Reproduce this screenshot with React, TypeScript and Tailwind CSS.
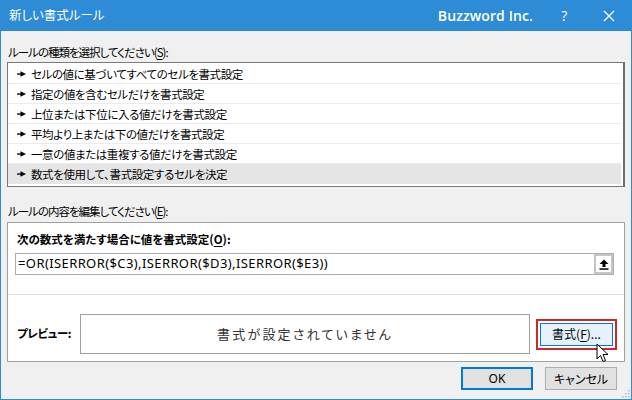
import React from "react";

const JP = "font-['Noto_Sans_CJK_JP','Noto_Sans',sans-serif] [font-feature-settings:'palt']";

const items = [
  "セルの値に基づいてすべてのセルを書式設定",
  "指定の値を含むセルだけを書式設定",
  "上位または下位に入る値だけを書式設定",
  "平均より上または下の値だけを書式設定",
  "一意の値または重複する値だけを書式設定",
  "数式を使用して、書式設定するセルを決定",
];

function Bullet() {
  return (
    <svg width="9" height="6" viewBox="0 0 9 6" className="shrink-0">
      <rect x="0" y="2.4" width="5" height="1.3" fill="#000" />
      <polygon points="3.5,0.3 9,3 3.5,5.7" fill="#000" />
    </svg>
  );
}

export default function App() {
  return (
    <div className={`w-[632px] h-[400px] bg-[#f0f0f0] border-x border-b border-[#2e8bd6] flex flex-col text-[11.5px] tracking-[-0.4px] text-black ${JP}`}>
      {/* title bar */}
      <div className="h-[31px] shrink-0 bg-[#2e8bd6] flex items-center pl-[9px] text-white -mx-px">
        <span className="text-[12.5px] tracking-normal">新しい書式ルール</span>
        <span className="ml-auto font-['Open_Sans',sans-serif] font-semibold text-[14px] tracking-[0.1px] [font-feature-settings:normal]">Buzzword Inc.</span>
        <span className="ml-[24px] w-[14px] text-center font-['Open_Sans',sans-serif] text-[14px]">?</span>
        <span className="ml-[32px] mr-[17px] flex items-center">
          <svg width="12" height="12" viewBox="0 0 12 12">
            <path d="M1 1L11 11M11 1L1 11" stroke="#fff" strokeWidth="1.2" />
          </svg>
        </span>
      </div>

      <div className="flex-1 flex flex-col px-[6px] relative">
        <div className="mt-[13px] h-[16px] leading-[16px] pl-[1px] tracking-[-1px]">
          ルールの種類を選択してください(<span className="underline underline-offset-2">S</span>):
        </div>
        <div className="mt-[2px] h-[125px] border border-[#7a7a7a] border-r-2 border-r-[#6d6d6d] bg-white pt-[1px] pr-[2px]">
          {items.map((t, i) => (
            <div
              key={i}
              className={`h-[20px] flex items-center gap-[5px] pl-[9px] border-b ${i === 5 ? "bg-[#e5e5e5] border-transparent" : "border-[#ececec]"}`}
            >
              <Bullet />
              <span className="leading-[20px]">{t}</span>
            </div>
          ))}
        </div>

        <div className="mt-[16px] h-[16px] leading-[16px] pl-[1px] tracking-[-1px]">
          ルールの内容を編集してください(<span className="underline underline-offset-2">E</span>):
        </div>
        <div className="mt-[3px] h-[140px] border border-[#a0a0a0] bg-white flex flex-col">
          <div className="mt-[8px] h-[16px] leading-[16px] pl-[9px] font-bold tracking-normal">
            次の数式を満たす場合に値を書式設定(<span className="underline underline-offset-2">O</span>):
          </div>
          <div className="mt-[6px] ml-[7px] mr-[10px] h-[22px] border border-[#abadb3] flex items-center">
            <span className="pl-[2px] font-['Noto_Sans',sans-serif] text-[13px] tracking-[0.4px] [font-feature-settings:normal]">
              =OR(ISERROR($C3),ISERROR($D3),ISERROR($E3))
            </span>
            <div className="ml-auto h-[20px] w-[19px] border-2 border-[#c4c4c4] bg-white flex items-center justify-center">
              <svg width="10" height="11" viewBox="0 0 10 11">
                <path d="M5 0.5L9.5 5H6.5V8H3.5V5H0.5Z" fill="#000" />
                <rect x="0.5" y="9.3" width="9" height="1.5" fill="#000" />
              </svg>
            </div>
          </div>
          <div className="mt-[19px] h-px bg-[#dcdcdc]" />
          <div className="flex items-center pt-[19px] pl-[9px]">
            <span className="w-[63px] font-bold">プレビュー:</span>
            <div className="w-[450px] h-[40px] border border-[#a0a0a0] flex items-center justify-center text-[13px] tracking-[2.2px] text-[#333]">
              書式が設定されていません
            </div>
            <div className="ml-[6px] w-[81px] h-[31px] border-2 border-[#d2262b] p-[2px] relative">
              <div className="w-full h-full bg-[#e5f1fb] border border-[#0078d7] flex items-center justify-center text-[12px] tracking-normal">
                書式(<span className="underline underline-offset-2">F</span>)...
              </div>
              <svg width="14" height="20" viewBox="0 0 14 20" className="absolute left-[58px] top-[22px]">
                <path d="M1 1V16L4.5 12.5L7 18.5L9.5 17.5L7 11.5H12Z" fill="#fff" stroke="#000" strokeWidth="1" strokeLinejoin="round" />
              </svg>
            </div>
          </div>
        </div>

        <div className="mt-[5px] flex justify-end gap-[12px] pr-[8px]">
          <div className="w-[72px] h-[23px] border-2 border-[#0078d7] bg-[#e1e1e1] flex items-center justify-center font-['Noto_Sans',sans-serif] text-[12px] tracking-normal [font-feature-settings:normal]">
            OK
          </div>
          <div className="w-[72px] h-[23px] border border-[#adadad] bg-[#e1e1e1] flex items-center justify-center text-[12px] tracking-normal">
            キャンセル
          </div>
        </div>
        <svg width="8" height="8" viewBox="0 0 8 8" className="absolute right-[1px] bottom-[1px]">
          <rect x="6" y="0" width="1.5" height="1.5" fill="#b5b5b5" />
          <rect x="3" y="3" width="1.5" height="1.5" fill="#b5b5b5" />
          <rect x="6" y="3" width="1.5" height="1.5" fill="#b5b5b5" />
          <rect x="0" y="6" width="1.5" height="1.5" fill="#b5b5b5" />
          <rect x="3" y="6" width="1.5" height="1.5" fill="#b5b5b5" />
          <rect x="6" y="6" width="1.5" height="1.5" fill="#b5b5b5" />
        </svg>
      </div>
    </div>
  );
}
